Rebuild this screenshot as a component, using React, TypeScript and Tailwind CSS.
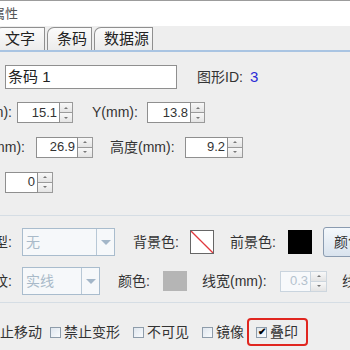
const font = "font-['Liberation_Sans','Noto_Sans_CJK_SC',sans-serif]";

function Spinner({ w, btn = 14, value, disabled = false }: { w: number; btn?: number; value: string; disabled?: boolean }) {
    return (
        <div className="flex h-[21px] shrink-0" style={{ width: w }}>
            <div
                className={`flex-1 h-full border flex items-center justify-end pr-[2px] text-[13px] ${disabled ? 'border-[#c9d4de] bg-[#f7f9fb] text-[#b4c2ce]' : 'border-[#8f8f8f] bg-white text-[#333]'}`}
            >
                {value}
            </div>
            <div className="flex flex-col h-full shrink-0" style={{ width: btn }}>
                <div className={`flex-1 border border-l-0 flex items-center justify-center bg-gradient-to-b from-[#f8f8f8] to-[#e4e4e4] ${disabled ? 'border-[#cdd6de]' : 'border-[#9a9a9a]'}`}>
                    <span className="block w-0 h-0 border-x-[2px] border-x-transparent border-b-[2px] border-b-[#777]" />
                </div>
                <div className={`flex-1 border border-l-0 border-t-0 flex items-center justify-center bg-gradient-to-b from-[#f8f8f8] to-[#e4e4e4] ${disabled ? 'border-[#cdd6de]' : 'border-[#9a9a9a]'}`}>
                    <span className="block w-0 h-0 border-x-[2px] border-x-transparent border-t-[2px] border-t-[#777]" />
                </div>
            </div>
        </div>
    );
}

function Combo({ w, text }: { w: number; text: string }) {
    return (
        <div className="flex h-[28px] border border-[#a9bccd] bg-[#f6f8fa] shrink-0" style={{ width: w }}>
            <div className="flex-1 flex items-center pl-[3px] text-[14px] text-[#a9bac9]">{text}</div>
            <div className="w-[18px] border-l border-[#b8c8d6] flex items-center justify-center">
                <span className="block w-0 h-0 border-x-[5px] border-x-transparent border-t-[5px] border-t-[#a3b6c8]" />
            </div>
        </div>
    );
}

function Check({ checked = false }: { checked?: boolean }) {
    return (
        <span className="w-[11px] h-[11px] border border-[#8e9caa] bg-gradient-to-br from-[#dfe6ee] to-[#f9fbfd] flex items-center justify-center shrink-0">
            {checked && <span className="text-[10px] leading-none text-black font-bold -mt-[1px]">✔</span>}
        </span>
    );
}

function Tab({ label, w }: { label: string; w: number }) {
    return (
        <div
            className="h-[23px] border border-b-0 border-[#8f8f8f] rounded-tl-[7px] bg-gradient-to-b from-[#fbfbfb] to-[#ececec] flex items-center pl-[9px] text-[15px] text-[#222] shrink-0"
            style={{ width: w }}
        >
            {label}
        </div>
    );
}

export default function App() {
    return (
        <div className={`w-[350px] h-[350px] overflow-hidden bg-[#eeeeee] text-[#333] whitespace-nowrap ${font}`}>
            <div className="h-[1px] bg-[#9c9c9c]" />
            {/* title bar */}
            <div className="h-[25px] bg-white flex items-center">
                <span className="-ml-[8px] text-[13px] text-[#555]">属性</span>
            </div>
            {/* tabs */}
            <div className="h-[24px] flex items-end gap-[2px] -ml-[5px]">
                <Tab label="文字" w={50} />
                <Tab label="条码" w={45} />
                <Tab label="数据源" w={59} />
            </div>
            <div className="h-[2px] bg-[#a9c4e2]" />

            <div className="pt-[13px] text-[14px]">
                {/* name */}
                <div className="flex items-center h-[24px]">
                    <div className="ml-[5px] w-[172px] h-[24px] border border-[#8f8f8f] bg-white flex items-center pl-[2px] text-[15px] text-[#222] shrink-0">
                        条码 1
                    </div>
                    <span className="ml-[20px]">图形ID:</span>
                    <span className="ml-[7px] text-[#2b2bd6] text-[15px]">3</span>
                </div>

                {/* X / Y */}
                <div className="flex items-center h-[21px] mt-[13px]">
                    <span className="w-[60px] -ml-[48px] text-right shrink-0">X(mm):</span>
                    <span className="ml-[5px]"><Spinner w={56} btn={13} value="15.1" /></span>
                    <span className="ml-[19px] w-[55px] shrink-0">Y(mm):</span>
                    <Spinner w={58} value="13.8" />
                </div>

                {/* width / height */}
                <div className="flex items-center h-[22px] mt-[13px]">
                    <span className="w-[70px] -ml-[45px] text-right shrink-0">宽度(mm):</span>
                    <span className="ml-[11px]"><Spinner w={57} btn={15} value="26.9" /></span>
                    <span className="ml-[17px] w-[75px] shrink-0">高度(mm):</span>
                    <Spinner w={58} btn={15} value="9.2" />
                </div>

                {/* rotate */}
                <div className="flex items-center h-[22px] mt-[13px]">
                    <span className="ml-[5px]"><Spinner w={48} btn={15} value="0" /></span>
                </div>

                <div className="h-[1px] bg-[#d5dde4] mt-[22px]" />

                {/* border type */}
                <div className="flex items-center h-[30px] mt-[11px]">
                    <span className="w-[70px] -ml-[58px] text-right shrink-0">边框类型:</span>
                    <span className="ml-[10px]"><Combo w={93} text="无" /></span>
                    <span className="ml-[18px] w-[57px] shrink-0">背景色:</span>
                    <span className="w-[24px] h-[24px] border border-[#666] bg-white shrink-0 overflow-hidden">
                        <svg width="22" height="22" viewBox="0 0 22 22">
                            <line x1="0" y1="0" x2="22" y2="22" stroke="#e0393e" strokeWidth="1.3" />
                        </svg>
                    </span>
                    <span className="ml-[16px] w-[58px] shrink-0">前景色:</span>
                    <span className="w-[24px] h-[24px] bg-black shrink-0" />
                    <div className="ml-[11px] w-[60px] h-[30px] border border-[#8a9bb0] rounded-[3px] bg-gradient-to-b from-[#f4f8fc] to-[#d9e3ee] flex items-center pl-[10px] shrink-0">
                        颜色
                    </div>
                </div>

                {/* line style */}
                <div className="flex items-center h-[28px] mt-[10px]">
                    <span className="w-[70px] -ml-[58px] text-right shrink-0">边框线纹:</span>
                    <span className="ml-[10px]"><Combo w={78} text="实线" /></span>
                    <span className="ml-[18px] w-[45px] shrink-0">颜色:</span>
                    <span className="w-[24px] h-[20px] bg-[#b5b5b5] shrink-0" />
                    <span className="ml-[15px] w-[78px] shrink-0">线宽(mm):</span>
                    <Spinner w={47} btn={16} value="0.3" disabled />
                    <span className="ml-[15px] shrink-0">线宽</span>
                </div>

                <div className="h-[1px] bg-[#d5dde4] mt-[7px]" />

                {/* options */}
                <div className="flex items-center h-[28px] mt-[15px]">
                    <span className="w-[60px] -ml-[18px] text-right shrink-0">禁止移动</span>
                    <span className="ml-[8px]"><Check /></span>
                    <span className="ml-[3px]">禁止变形</span>
                    <span className="ml-[13px]"><Check /></span>
                    <span className="ml-[3px]">不可见</span>
                    <span className="ml-[13px]"><Check /></span>
                    <span className="ml-[3px]">镜像</span>
                    <div className="ml-[3px] h-[28px] w-[61px] border-2 border-[#e0261f] rounded-[4px] flex items-center pl-[7px] shrink-0">
                        <Check checked />
                        <span className="ml-[3px]">叠印</span>
                    </div>
                </div>
            </div>
        </div>
    );
}
